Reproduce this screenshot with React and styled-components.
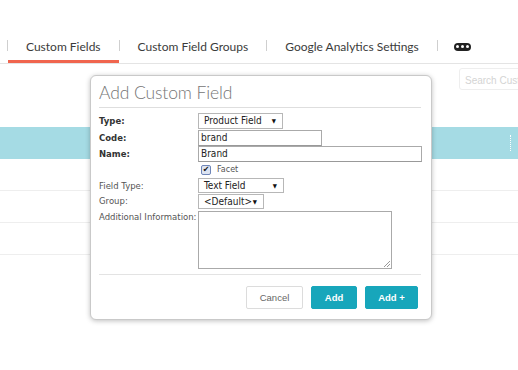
import React from "react";
import styled, { createGlobalStyle } from "styled-components";

const Global = createGlobalStyle`
  html, body { margin: 0; padding: 0; background: #fff; }
  body { width: 518px; height: 370px; overflow: hidden; position: relative; }
`;

const Page = styled.div`
  position: relative;
  width: 518px;
  height: 370px;
  font-family: Lato, "Open Sans", sans-serif;
`;

const TabBar = styled.div`
  height: 64px;
  border-bottom: 1px solid #e4e4e4;
  display: flex;
  align-items: flex-end;
  padding-left: 7px;
  box-sizing: border-box;
`;

const Sep = styled.span`
  width: 1px;
  height: 11px;
  background: #cfcfcf;
  align-self: flex-end;
  margin-bottom: 12px;
`;

const Tab = styled.div`
  height: 34px;
  display: flex;
  align-items: center;
  padding: 0 ${(p) => p.$pad || 18}px;
  font-size: 12px;
  color: #3b3b3b;
  box-sizing: border-box;
  border-bottom: 3px solid ${(p) => (p.$active ? "#f0654e" : "transparent")};
  padding-top: 4px;
`;

const More = styled.span`
  display: inline-flex;
  align-items: center;
  justify-content: center;
  gap: 2px;
  width: 17px;
  height: 8px;
  border-radius: 4px;
  background: #222;
  i {
    width: 3px;
    height: 3px;
    border-radius: 50%;
    background: #fff;
  }
`;

const Toolbar = styled.div`
  height: 63px;
  display: flex;
  justify-content: flex-end;
  align-items: flex-start;
  padding-top: 4px;
  box-sizing: border-box;
`;

const Search = styled.div`
  width: 70px;
  height: 22px;
  margin-right: -11px;
  border: 1px solid #eee;
  border-radius: 3px;
  font-family: "Liberation Sans", Arial, sans-serif;
  font-size: 10px;
  color: #d4d4d4;
  padding: 6px 5px 0;
  box-sizing: border-box;
  white-space: nowrap;
  overflow: hidden;
`;

const HeadRow = styled.div`
  height: 32px;
  background: #a5dbe4;
  display: flex;
  justify-content: flex-end;
  align-items: center;
  padding-right: 6px;
  span {
    width: 1px;
    height: 16px;
    border-left: 1px dotted #fff;
  }
`;

const Row = styled.div`
  height: 32px;
  border-bottom: 1px solid #eeeeee;
  box-sizing: border-box;
`;

const Modal = styled.div`
  position: absolute;
  left: 90px;
  top: 75px;
  width: 342px;
  height: 245px;
  box-sizing: border-box;
  background: #fff;
  border: 1px solid #c9c9c9;
  border-radius: 6px;
  box-shadow: 0 1px 5px rgba(0, 0, 0, 0.25);
  padding: 0 10px 0 8px;
  display: flex;
  flex-direction: column;
`;

const Title = styled.h2`
  margin: 0;
  font-family: Lato, sans-serif;
  font-weight: 300;
  font-size: 17.5px;
  color: #757575;
  height: 32px;
  line-height: 22px;
  padding-top: 6px;
  box-sizing: border-box;
  border-bottom: 1px solid #dedede;
  letter-spacing: -0.1px;
`;

const Form = styled.div`
  display: grid;
  grid-template-columns: 99px 1fr;
  padding-top: 5px;
  font-family: "DejaVu Sans Condensed", "DejaVu Sans", Verdana, sans-serif;
  align-items: center;
`;

const Label = styled.div`
  font-family: "DejaVu Sans", Verdana, sans-serif;
  font-size: 8.5px;
  line-height: 10px;
  font-weight: ${(p) => (p.$bold ? 700 : 400)};
  color: ${(p) => (p.$bold ? "#333" : "#555")};
  align-self: ${(p) => (p.$top ? "start" : "center")};
  padding-top: ${(p) => (p.$top ? "3px" : "0")};
`;

const Select = styled.div`
  width: ${(p) => p.$w}px;
  height: ${(p) => p.$h || 15}px;
  margin-top: ${(p) => p.$mt || 0}px;
  box-sizing: border-box;
  border: 1px solid #b7b7b7;
  background: #fff;
  display: flex;
  align-items: center;
  justify-content: space-between;
  padding: 0 6px 0 5px;
  font-size: 10px;
  line-height: 12px;
  color: #222;
  &::after {
    content: "▼";
    font-size: 6px;
    color: #111;
  }
`;

const Input = styled.div`
  width: ${(p) => p.$w}px;
  height: 16px;
  margin-top: ${(p) => p.$mt || 0}px;
  box-sizing: border-box;
  border: 1px solid #aaa;
  border-bottom-color: #999;
  padding: 0 2px;
  font-size: 10px;
  line-height: 14px;
  color: #222;
`;

const Check = styled.div`
  display: flex;
  align-items: center;
  gap: 6px;
  height: 16px;
  padding-left: 3px;
  font-family: "DejaVu Sans", Verdana, sans-serif;
  font-size: 8px;
  line-height: 10px;
  color: #555;
`;

const Box = styled.span`
  width: 8px;
  height: 8px;
  border: 1px solid #6f86b8;
  border-radius: 2px;
  background: #dde4f2;
  display: flex;
  align-items: center;
  justify-content: center;
  font-size: 8px;
  line-height: 8px;
  color: #111;
`;

const TextArea = styled.div`
  width: 194px;
  height: 58px;
  box-sizing: border-box;
  border: 1px solid #aaa;
  margin-top: 2px;
  position: relative;
  &::after {
    content: "";
    position: absolute;
    right: 1px;
    bottom: 1px;
    width: 6px;
    height: 6px;
    background: linear-gradient(135deg, transparent 45%, #999 45%, #999 55%, transparent 55%, transparent 70%, #999 70%, #999 80%, transparent 80%);
  }
`;

const Footer = styled.div`
  margin-top: 5px;
  border-top: 1px solid #e3e3e3;
  display: flex;
  justify-content: flex-end;
  gap: 8px;
  padding: 11px 3px 0 0;
`;

const Button = styled.button`
  height: 23px;
  width: ${(p) => p.$w}px;
  border-radius: 2px;
  font-family: "Liberation Sans", Arial, sans-serif;
  font-size: 9.5px;
  padding: 0;
  border: 1px solid ${(p) => (p.$primary ? "#17a6bb" : "#dcdcdc")};
  background: ${(p) => (p.$primary ? "#17a6bb" : "#fff")};
  color: ${(p) => (p.$primary ? "#fff" : "#666")};
  font-weight: ${(p) => (p.$primary ? 600 : 400)};
`;

export default function App() {
  return (
    <Page>
      <Global />
      <TabBar>
        <Sep />
        <Tab $active $pad={18}>Custom Fields</Tab>
        <Sep />
        <Tab>Custom Field Groups</Tab>
        <Sep />
        <Tab>Google Analytics Settings</Tab>
        <Sep />
        <Tab $pad={16}>
          <More>
            <i />
            <i />
            <i />
          </More>
        </Tab>
      </TabBar>
      <Toolbar>
        <Search>Search Custom Fields</Search>
      </Toolbar>
      <HeadRow>
        <span />
      </HeadRow>
      <Row />
      <Row />
      <Row />

      <Modal>
        <Title>Add Custom Field</Title>
        <Form>
          <Label $bold>Type:</Label>
          <Select $w={85} $h={16}>Product Field</Select>
          <Label $bold>Code:</Label>
          <Input $w={124} $mt={1}>brand</Input>
          <Label $bold>Name:</Label>
          <Input $w={224}>Brand</Input>
          <span />
          <Check>
            <Box>✔</Box>Facet
          </Check>
          <Label>Field Type:</Label>
          <Select $w={86}>Text Field</Select>
          <Label>Group:</Label>
          <Select $w={66} $mt={1}>&lt;Default&gt;</Select>
          <Label $top>Additional Information:</Label>
          <TextArea />
        </Form>
        <Footer>
          <Button $w={57}>Cancel</Button>
          <Button $primary $w={46}>Add</Button>
          <Button $primary $w={53}>Add +</Button>
        </Footer>
      </Modal>
    </Page>
  );
}
